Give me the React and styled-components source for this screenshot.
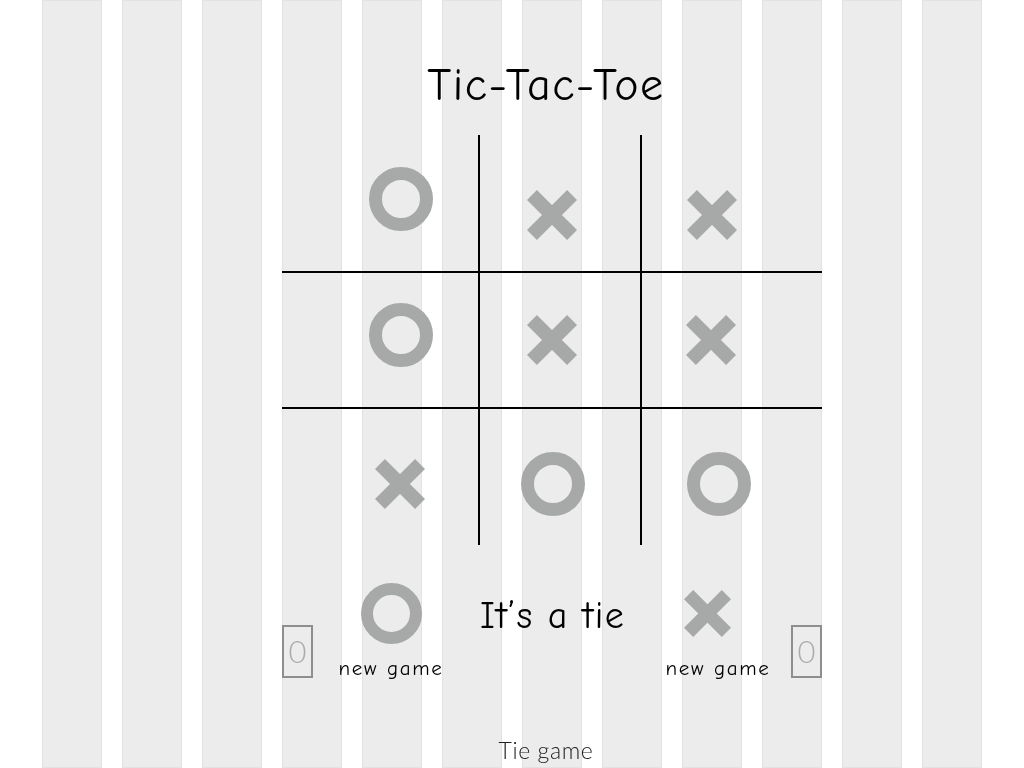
import React from 'react';
import styled, { createGlobalStyle } from 'styled-components';

const GlobalStyle = createGlobalStyle`
  html, body {
    margin: 0;
    padding: 0;
    background: #ffffff;
  }
  body {
    width: 1024px;
    height: 768px;
    overflow: hidden;
  }
`;

const hand = `"Comic Sans MS", "Comic Neue", "DejaVu Sans", sans-serif`;
const thin = `"Helvetica Neue", "Lato", "Liberation Sans", sans-serif`;
const markGray = '#a6a9a7';

const board = [
  [
    { mark: 'O', dx: 21, dy: -4 },
    { mark: 'X', dx: -8, dy: 12 },
    { mark: 'X', dx: -20, dy: 12 },
  ],
  [
    { mark: 'O', dx: 21, dy: -5 },
    { mark: 'X', dx: -8, dy: 0 },
    { mark: 'X', dx: -21, dy: 0 },
  ],
  [
    { mark: 'X', dx: 20, dy: 7 },
    { mark: 'O', dx: -7, dy: 7 },
    { mark: 'O', dx: -13, dy: 7 },
  ],
];

const Ring = ({ size = 64, width = 13 }) => (
  <svg width={size} height={size} viewBox={`0 0 ${size} ${size}`}>
    <circle
      cx={size / 2}
      cy={size / 2}
      r={(size - width) / 2}
      fill="none"
      stroke={markGray}
      strokeWidth={width}
    />
  </svg>
);

const Cross = ({ size = 50, width = 14 }) => {
  const a = width / 2 / Math.SQRT2;
  return (
    <svg width={size} height={size} viewBox={`0 0 ${size} ${size}`}>
      <g stroke={markGray} strokeWidth={width} strokeLinecap="butt">
        <line x1={a} y1={a} x2={size - a} y2={size - a} />
        <line x1={size - a} y1={a} x2={a} y2={size - a} />
      </g>
    </svg>
  );
};

const App = () => {
  return (
    <>
      <GlobalStyle />
      <Columns>
        {Array.from({ length: 12 }).map((_, i) => (
          <Column key={i} />
        ))}
      </Columns>

      <Page>
        <Title>Tic-Tac-Toe</Title>

        <Board>
          {board.map((row, r) =>
            row.map((cell, c) => (
              <Cell key={`${r}-${c}`} $row={r} $col={c}>
                <Mark $dx={cell.dx} $dy={cell.dy}>
                  {cell.mark === 'O' ? <Ring /> : <Cross />}
                </Mark>
              </Cell>
            ))
          )}
        </Board>

        <Footer>
          <Side>
            <ScoreBox>0</ScoreBox>
            <Player>
              <PlayerMark>
                <Ring size={61} width={12} />
              </PlayerMark>
              <NewGame>new game</NewGame>
            </Player>
          </Side>

          <Status>It’s a tie</Status>

          <Side $right>
            <Player>
              <PlayerMark $shift={-11}>
                <Cross size={47} width={13} />
              </PlayerMark>
              <NewGame>new game</NewGame>
            </Player>
            <ScoreBox>0</ScoreBox>
          </Side>
        </Footer>

        <Result>Tie game</Result>
      </Page>
    </>
  );
};

const Columns = styled.div`
  position: fixed;
  top: 0;
  bottom: 0;
  left: 50%;
  transform: translateX(-50%);
  width: 940px;
  display: flex;
  gap: 20px;
  z-index: 0;
`;

const Column = styled.div`
  width: 60px;
  box-sizing: border-box;
  background: #ececec;
  border: 1px solid #e2e2e2;
`;

const Page = styled.div`
  position: relative;
  z-index: 1;
  width: 940px;
  margin: 0 auto;
  display: grid;
  grid-template-columns: repeat(12, 60px);
  column-gap: 20px;
  align-content: start;
`;

const Title = styled.h1`
  grid-column: 4 / 11;
  margin: 57px 12px 20px 0;
  font-family: ${hand};
  font-weight: normal;
  font-size: 46px;
  line-height: 58px;
  letter-spacing: 1.5px;
  color: #000;
  text-align: center;
`;

const Board = styled.div`
  grid-column: 4 / 11;
  display: grid;
  grid-template-columns: 198px 162px 180px;
  grid-template-rows: 138px 136px 136px;
`;

const Cell = styled.div`
  box-sizing: border-box;
  display: flex;
  align-items: center;
  justify-content: center;
  border-right: ${(p) => (p.$col < 2 ? '2px solid #000' : 'none')};
  border-bottom: ${(p) => (p.$row < 2 ? '2px solid #000' : 'none')};
`;

const Mark = styled.div`
  display: flex;
  transform: translate(${(p) => p.$dx}px, ${(p) => p.$dy}px);
`;

const Footer = styled.div`
  grid-column: 4 / 11;
  display: flex;
  align-items: flex-start;
  height: 135px;
`;

const Side = styled.div`
  width: ${(p) => (p.$right ? '180px' : '198px')};
  height: 100%;
  display: flex;
  align-items: flex-end;
  justify-content: ${(p) => (p.$right ? 'flex-end' : 'flex-start')};
  gap: ${(p) => (p.$right ? '18px' : '23px')};
`;

const ScoreBox = styled.div`
  box-sizing: border-box;
  width: 31px;
  height: 53px;
  margin-bottom: 2px;
  padding-bottom: 2px;
  border: 2px solid #8e8e8e;
  display: flex;
  align-items: center;
  justify-content: center;
  font-family: ${thin};
  font-weight: 300;
  font-size: 31px;
  color: #ababab;
`;

const Player = styled.div`
  width: 110px;
  display: flex;
  flex-direction: column;
  align-items: center;
`;

const PlayerMark = styled.div`
  height: 61px;
  display: flex;
  align-items: center;
  justify-content: center;
  transform: translateX(${(p) => p.$shift || 0}px);
`;

const NewGame = styled.div`
  margin-top: 12px;
  font-family: ${hand};
  font-size: 21px;
  line-height: 24px;
  letter-spacing: 1.7px;
  color: #000;
  white-space: nowrap;
`;

const Status = styled.div`
  flex: 1;
  padding: 48px 17px 0 0;
  font-family: ${hand};
  font-size: 38px;
  line-height: 46px;
  letter-spacing: 1.3px;
  color: #000;
  text-align: center;
  white-space: nowrap;
  display: flex;
  justify-content: center;
`;

const Result = styled.div`
  grid-column: 4 / 11;
  margin: 57px 12px 0 0;
  font-family: ${thin};
  font-weight: 300;
  font-size: 23px;
  line-height: 26px;
  letter-spacing: 0.6px;
  color: #222;
  text-align: center;
`;

export default App;
